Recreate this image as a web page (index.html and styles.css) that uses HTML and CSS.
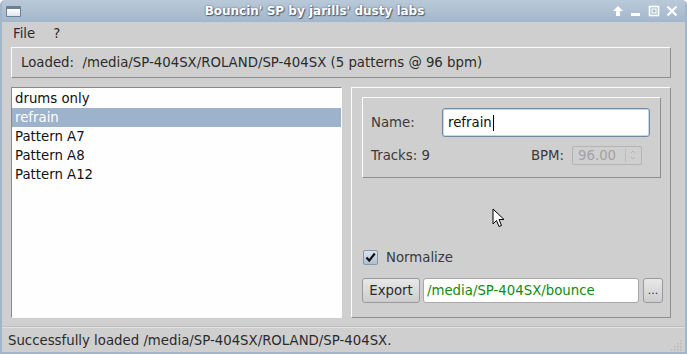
FILE: index.html
```html
<!DOCTYPE html>
<html>
<head>
<meta charset="utf-8">
<link rel="stylesheet" href="styles.css">
</head>
<body>
<div class="window">
  <div class="titlebar">
    <div class="winicon"></div>
    <div class="title">Bouncin' SP by jarills' dusty labs</div>
    <div class="wbtns">
      <svg width="12" height="12" viewBox="0 0 12 12"><path d="M6 1 L11 6 L8 6 L8 11 L4 11 L4 6 L1 6 Z" fill="#fff"/></svg>
      <svg width="12" height="12" viewBox="0 0 12 12"><rect x="1" y="8" width="9" height="3" fill="#fff"/></svg>
      <svg width="12" height="12" viewBox="0 0 12 12"><rect x="1.5" y="1.5" width="9" height="9" fill="none" stroke="#fff" stroke-width="1.6"/><rect x="4" y="4" width="4" height="4" fill="none" stroke="#fff" stroke-width="1"/></svg>
      <svg width="12" height="12" viewBox="0 0 12 12"><path d="M1.5 1.5 L10.5 10.5 M10.5 1.5 L1.5 10.5" stroke="#fff" stroke-width="2.2"/></svg>
    </div>
  </div>
  <div class="menubar">
    <span class="menu">File</span>
    <span class="menu">?</span>
  </div>
  <div class="body">
    <div class="loaded">Loaded:&nbsp; /media/SP-404SX/ROLAND/SP-404SX (5 patterns @ 96 bpm)</div>
    <div class="main">
      <div class="list">
        <div class="item">drums only</div>
        <div class="item sel">refrain</div>
        <div class="item">Pattern A7</div>
        <div class="item">Pattern A8</div>
        <div class="item">Pattern A12</div>
      </div>
      <div class="panel">
        <div class="group">
          <div class="row1">
            <span class="lbl">Name:</span>
            <div class="nameinput">refrain<span class="caret"></span></div>
          </div>
          <div class="row2">
            <span class="lbl">Tracks: 9</span>
            <div class="bpm">
              <span class="lbl">BPM:</span>
              <div class="spin"><span class="spinval">96.00</span><div class="arrows"><svg width="8" height="14" viewBox="0 0 8 14"><path d="M2 5 L4 3 L6 5 M2 9 L4 11 L6 9" stroke="#b5b5b5" fill="none" stroke-width="1"/></svg></div></div>
            </div>
          </div>
        </div>
        <div class="spacer">
          <svg class="cursor" width="14" height="20" viewBox="0 0 14 20"><path d="M1 1 L1 16 L4.5 12.5 L7 18.5 L9.5 17.5 L7 11.5 L12 11.5 Z" fill="#fff" stroke="#000" stroke-width="1"/></svg>
        </div>
        <div class="check">
          <span class="box"><svg width="13" height="13" viewBox="0 0 13 13"><path d="M2.5 6.5 L5.2 9.6 L10.8 2.5" stroke="#111" stroke-width="2.2" fill="none"/></svg></span>
          <span class="lbl">Normalize</span>
        </div>
        <div class="exportrow">
          <div class="btn export">Export</div>
          <div class="pathinput">/media/SP-404SX/bounce</div>
          <div class="btn dots">...</div>
        </div>
      </div>
    </div>
  </div>
  <div class="statusbar">
    <span>Successfully loaded /media/SP-404SX/ROLAND/SP-404SX.</span>
    <svg class="grip" width="12" height="12" viewBox="0 0 12 12">
      <g fill="#b8b8b8"><rect x="9" y="1" width="1.5" height="1.5"/><rect x="6" y="4" width="1.5" height="1.5"/><rect x="9" y="4" width="1.5" height="1.5"/><rect x="3" y="7" width="1.5" height="1.5"/><rect x="6" y="7" width="1.5" height="1.5"/><rect x="9" y="7" width="1.5" height="1.5"/><rect x="0" y="10" width="1.5" height="1.5"/><rect x="3" y="10" width="1.5" height="1.5"/><rect x="6" y="10" width="1.5" height="1.5"/><rect x="9" y="10" width="1.5" height="1.5"/></g>
    </svg>
  </div>
</div>
</body>
</html>
```
FILE: styles.css
```css
* { box-sizing: border-box; }
html, body { margin: 0; padding: 0; }
body {
  width: 687px; height: 354px; overflow: hidden;
  font-family: "DejaVu Sans", sans-serif;
  font-size: 13.3px;
  color: #2b2b2b;
}
.window {
  width: 687px; height: 354px;
  background: #cfcfcf;
  border: 2px solid #a2b5c9;
  border-top: none;
  border-radius: 5px 5px 0 0;
  display: flex; flex-direction: column;
  overflow: hidden;
}
.titlebar {
  height: 22px; flex: none;
  margin: 0 -2px;
  background: linear-gradient(#b9c9d9, #a3b7cb);
  border-radius: 5px 5px 0 0;
  display: flex; align-items: center;
  position: relative;
}
.winicon {
  width: 15px; height: 11px; margin-left: 6px;
  background: linear-gradient(#fff, #dfe5ec);
  border: 1px solid #6d7f93;
  border-top: 3px solid #6d7f93;
  border-radius: 1px;
}
.title {
  flex: 1; text-align: center;
  font-weight: bold; font-size: 12px;
  color: #fff;
  text-shadow: 0 0 2px #4a5e74, 1px 1px 1px #4a5e74;
  margin-left: -4px;
}
.wbtns { display: flex; gap: 6px; margin-right: 9px; align-items: center; }
.menubar {
  height: 22px; flex: none;
  display: flex; align-items: center;
  padding-left: 11px;
  gap: 18px;
}
.body { flex: 1; display: flex; flex-direction: column; padding: 3px 14px 0 9px; }
.loaded {
  height: 31px;
  border-top: 1px solid #fbfbfb; border-left: 1px solid #fbfbfb;
  border-bottom: 1px solid #8e8e8e; border-right: 1px solid #8e8e8e;
  padding-left: 9px;
  display: flex; align-items: center;
}
.main { display: flex; gap: 9px; margin-top: 9px; height: 231px; }
.list {
  width: 331px; flex: none; background: #fefefe;
  border-top: 1px solid #8a8a8a; border-left: 1px solid #8a8a8a;
  border-bottom: 1px solid #fafafa; border-right: 1px solid #fafafa;
  padding-top: 1px;
}
.item { height: 19px; line-height: 19px; padding-left: 3px; color: #111; white-space: nowrap; }
.item.sel { background: #9db3cb; color: #fff; }
.panel {
  flex: 1; min-width: 0;
  border-top: 1px solid #fbfbfb; border-left: 1px solid #fbfbfb;
  border-bottom: 1px solid #8e8e8e; border-right: 1px solid #8e8e8e;
  padding: 9px 9px 14px 10px;
  display: flex; flex-direction: column;
}
.group {
  height: 81px;
  border-top: 1px solid #fbfbfb; border-left: 1px solid #fbfbfb;
  border-bottom: 1px solid #8e8e8e; border-right: 1px solid #8e8e8e;
  padding: 10px 10px 0 8px;
}
.lbl { color: #3a3a3a; white-space: nowrap; }
.row1 { display: flex; align-items: center; height: 29px; }
.row1 .lbl { width: 71px; flex: none; }
.nameinput {
  width: 208px; height: 29px; flex: none;
  background: #fff;
  border: 1px solid #6f8aa6;
  border-radius: 3px;
  padding-left: 5px;
  display: flex; align-items: center;
  color: #111;
  box-shadow: inset 0 0 0 1px #c9d6e3;
}
.caret { display: inline-block; width: 1px; height: 16px; background: #000; margin-left: 1px; }
.row2 { display: flex; align-items: center; justify-content: space-between; margin-top: 9px; height: 18px; padding-right: 8px; }
.bpm { display: flex; align-items: center; gap: 8px; }
.spin {
  width: 70px; height: 19px;
  border: 1px solid #b4b4b4; border-radius: 2px;
  display: flex; align-items: center;
  background: #cfcfcf;
}
.spinval { flex: 1; color: #a2a2a2; padding-left: 5px; }
.arrows { width: 15px; height: 15px; border-left: 1px solid #bdbdbd; border-radius: 2px; display: flex; align-items: center; justify-content: center; margin-right: 1px; }
.spacer { flex: 1; position: relative; }
.cursor { position: absolute; left: 130px; top: 30px; }
.check { display: flex; align-items: center; gap: 8px; height: 20px; margin-left: 1px; }
.box {
  width: 15px; height: 15px;
  border: 1px solid #8797a8; border-radius: 2px;
  background: linear-gradient(#dbe4ee, #aebfd1);
  display: flex; align-items: center; justify-content: center;
}
.exportrow { display: flex; gap: 3px; margin-top: 11px; height: 25px; }
.btn {
  height: 25px; flex: none;
  border: 1px solid #9a9a9a; border-radius: 3px;
  background: linear-gradient(#e8e8e8, #cdcdcd);
  display: flex; align-items: center; justify-content: center;
  color: #2b2b2b;
}
.btn.export { width: 58px; }
.pathinput {
  width: 216px; height: 25px; flex: none;
  background: #fff; border: 1px solid #a8a8a8; border-radius: 3px;
  color: #128a12; padding-left: 3px;
  display: flex; align-items: center;
  white-space: nowrap;
}
.btn.dots { width: 20px; font-size: 11px; margin-left: 1px; }
.statusbar {
  height: 27px; flex: none;
  margin-top: 8px;
  border-top: 1px solid #bebebe;
  box-shadow: inset 0 1px 0 #e2e2e2;
  display: flex; align-items: center; justify-content: space-between;
  padding-left: 6px; padding-right: 2px;
  position: relative;
}
.grip { position: absolute; right: 2px; bottom: 2px; }
```
